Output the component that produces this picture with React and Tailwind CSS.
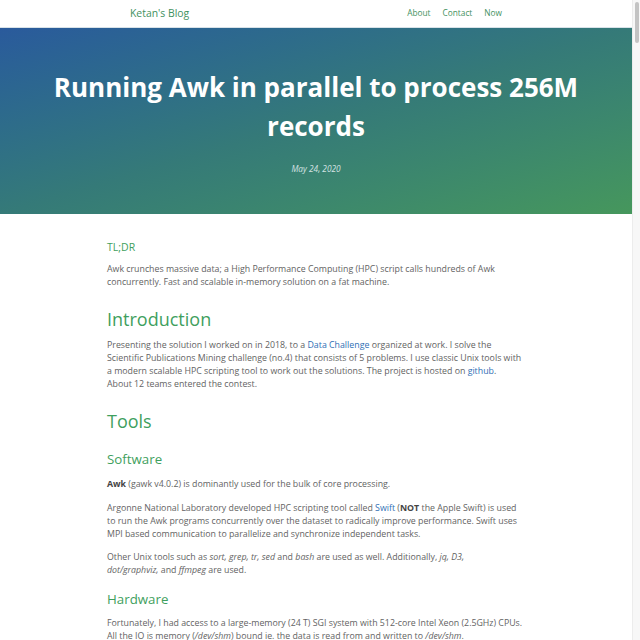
import React from "react";

const font = { fontFamily: '"Open Sans", "Liberation Sans", sans-serif' };

function Link({ children }) {
  return <a className="text-[#2f6fb5]">{children}</a>;
}

export default function App() {
  return (
    <div className="h-screen overflow-hidden flex bg-white text-[#636363]" style={font}>
      <div className="w-[632px] h-full overflow-hidden">
        <header className="h-[28px] bg-white border-b border-[#d8e2e8]">
          <div className="w-[372px] mx-auto h-full flex items-center justify-between">
            <div className="text-[10.4px] text-[#3f9160]">Ketan's Blog</div>
            <nav className="flex gap-[12px] text-[8.3px] text-[#3f9160]">
              <span>About</span>
              <span>Contact</span>
              <span>Now</span>
            </nav>
          </div>
        </header>

        <section className="h-[186px] bg-gradient-to-br from-[#2a5a9c] via-[#357a78] to-[#46975c] flex flex-col items-center pt-[40px]">
          <h1 className="text-white font-bold text-[26px] leading-[39px] text-center w-[560px]">
            Running Awk in parallel to process 256M records
          </h1>
          <div className="mt-[17px] text-[8.3px] leading-[12px] italic text-[#d3e2e2]">May 24, 2020</div>
        </section>

        <main className="w-[418px] mx-auto text-[8.8px] leading-[13px] pt-[25px]">
          <h3 className="text-[10.5px] text-[#3f9f5e] leading-[16px]">TL;DR</h3>
          <p className="mt-[8px]">
            Awk crunches massive data; a High Performance Computing (HPC) script calls hundreds of Awk
            concurrently. Fast and scalable in-memory solution on a fat machine.
          </p>

          <h2 className="mt-[18px] text-[18px] leading-[24px] text-[#3f9f5e]">Introduction</h2>
          <p className="mt-[8px]">
            Presenting the solution I worked on in 2018, to a <Link>Data Challenge</Link> organized at work. I solve the
            Scientific Publications Mining challenge (no.4) that consists of 5 problems. I use classic Unix tools with
            a modern scalable HPC scripting tool to work out the solutions. The project is hosted on <Link>github</Link>.
            <br />
            About 12 teams entered the contest.
          </p>

          <h2 className="mt-[18px] text-[18px] leading-[24px] text-[#3f9f5e]">Tools</h2>
          <h3 className="mt-[17px] text-[13.3px] leading-[18px] text-[#3f9f5e]">Software</h3>
          <p className="mt-[10px]">
            <b className="text-[#444]">Awk</b> (gawk v4.0.2) is dominantly used for the bulk of core processing.
          </p>
          <p className="mt-[11px]">
            Argonne National Laboratory developed HPC scripting tool called <Link>Swift</Link> (<b className="text-[#444]">NOT</b> the Apple Swift) is used
            to run the Awk programs concurrently over the dataset to radically improve performance. Swift uses
            MPI based communication to parallelize and synchronize independent tasks.
          </p>
          <p className="mt-[10px]">
            Other Unix tools such as <i>sort, grep, tr, sed</i> and <i>bash</i> are used as well. Additionally, <i>jq, D3,</i>
            <br />
            <i>dot/graphviz,</i> and <i>ffmpeg</i> are used.
          </p>
          <h3 className="mt-[13px] text-[13.3px] leading-[18px] text-[#3f9f5e]">Hardware</h3>
          <p className="mt-[9px]">
            Fortunately, I had access to a large-memory (24 T) SGI system with 512-core Intel Xeon (2.5GHz) CPUs.
            All the IO is memory (<i>/dev/shm</i>) bound ie. the data is read from and written to <i>/dev/shm</i>.
          </p>
          <p className="mt-[10px]">
            The CPUs are shared by other users, so the number of cores available at any time varies.
          </p>
        </main>
      </div>

      <div className="w-[8px] h-full bg-[#f7f7f7] border-l border-[#ececec] pt-[2px] flex justify-center">
        <div className="w-[4px] h-[41px] rounded-full bg-[#c3c3c3]" />
      </div>
    </div>
  );
}
